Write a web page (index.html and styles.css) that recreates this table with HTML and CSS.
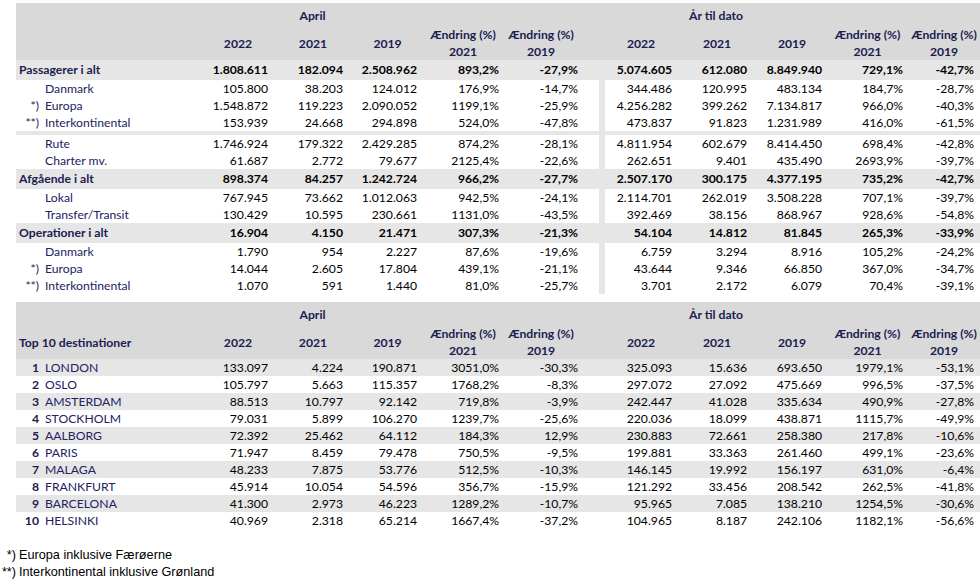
FILE: index.html
```html
<!DOCTYPE html>
<html lang="da">
<head>
<meta charset="utf-8">
<title>Trafiktal April</title>
<link rel="stylesheet" href="styles.css">
</head>
<body>
<div class="page">
<table class="tbl">
<colgroup>
<col class="ca"><col class="cb"><col class="c1"><col class="c2"><col class="c3"><col class="c4"><col class="c5"><col class="cg"><col class="c6"><col class="c7"><col class="c8"><col class="c9"><col class="c10">
</colgroup>
<thead>
<tr class="h1">
<th colspan="2"></th><th colspan="3" class="hc">April</th><th></th><th></th><th></th><th colspan="3" class="hc">År til dato</th><th></th><th></th>
</tr>
<tr class="h2">
<th colspan="2"></th><th class="hy">2022</th><th class="hy hs">2021</th><th class="hy hs">2019</th><th class="hy">Ændring (%)<br>2021</th><th class="hy h5">Ændring (%)<br>2019</th><th></th><th class="hy">2022</th><th class="hy hs">2021</th><th class="hy hs">2019</th><th class="hy">Ændring (%)<br>2021</th><th class="hy">Ændring (%)<br>2019</th>
</tr>
</thead>
<tbody>
<tr class="band"><td colspan="2" class="tl">Passagerer i alt</td><td class="n">1.808.611</td><td class="n">182.094</td><td class="n">2.508.962</td><td class="n">893,2%</td><td class="n n5">-27,9%</td><td></td><td class="n">5.074.605</td><td class="n">612.080</td><td class="n">8.849.940</td><td class="n">729,1%</td><td class="n n10">-42,7%</td></tr>
<tr class="r"><td class="pf"></td><td class="lb">Danmark</td><td class="n">105.800</td><td class="n">38.203</td><td class="n">124.012</td><td class="n">176,9%</td><td class="n n5">-14,7%</td><td class="g"></td><td class="n">344.486</td><td class="n">120.995</td><td class="n">483.134</td><td class="n">184,7%</td><td class="n n10">-28,7%</td></tr>
<tr class="r"><td class="pf">*)</td><td class="lb">Europa</td><td class="n">1.548.872</td><td class="n">119.223</td><td class="n">2.090.052</td><td class="n">1199,1%</td><td class="n n5">-25,9%</td><td class="g"></td><td class="n">4.256.282</td><td class="n">399.262</td><td class="n">7.134.817</td><td class="n">966,0%</td><td class="n n10">-40,3%</td></tr>
<tr class="r"><td class="pf">**)</td><td class="lb">Interkontinental</td><td class="n">153.939</td><td class="n">24.668</td><td class="n">294.898</td><td class="n">524,0%</td><td class="n n5">-47,8%</td><td class="g"></td><td class="n">473.837</td><td class="n">91.823</td><td class="n">1.231.989</td><td class="n">416,0%</td><td class="n n10">-61,5%</td></tr>
<tr class="sep"><td colspan="13"></td></tr>
<tr class="r"><td class="pf"></td><td class="lb">Rute</td><td class="n">1.746.924</td><td class="n">179.322</td><td class="n">2.429.285</td><td class="n">874,2%</td><td class="n n5">-28,1%</td><td class="g"></td><td class="n">4.811.954</td><td class="n">602.679</td><td class="n">8.414.450</td><td class="n">698,4%</td><td class="n n10">-42,8%</td></tr>
<tr class="r"><td class="pf"></td><td class="lb">Charter mv.</td><td class="n">61.687</td><td class="n">2.772</td><td class="n">79.677</td><td class="n">2125,4%</td><td class="n n5">-22,6%</td><td class="g"></td><td class="n">262.651</td><td class="n">9.401</td><td class="n">435.490</td><td class="n">2693,9%</td><td class="n n10">-39,7%</td></tr>
<tr class="band"><td colspan="2" class="tl">Afgående i alt</td><td class="n">898.374</td><td class="n">84.257</td><td class="n">1.242.724</td><td class="n">966,2%</td><td class="n n5">-27,7%</td><td></td><td class="n">2.507.170</td><td class="n">300.175</td><td class="n">4.377.195</td><td class="n">735,2%</td><td class="n n10">-42,7%</td></tr>
<tr class="r"><td class="pf"></td><td class="lb">Lokal</td><td class="n">767.945</td><td class="n">73.662</td><td class="n">1.012.063</td><td class="n">942,5%</td><td class="n n5">-24,1%</td><td class="g"></td><td class="n">2.114.701</td><td class="n">262.019</td><td class="n">3.508.228</td><td class="n">707,1%</td><td class="n n10">-39,7%</td></tr>
<tr class="r"><td class="pf"></td><td class="lb">Transfer/Transit</td><td class="n">130.429</td><td class="n">10.595</td><td class="n">230.661</td><td class="n">1131,0%</td><td class="n n5">-43,5%</td><td class="g"></td><td class="n">392.469</td><td class="n">38.156</td><td class="n">868.967</td><td class="n">928,6%</td><td class="n n10">-54,8%</td></tr>
<tr class="band"><td colspan="2" class="tl">Operationer i alt</td><td class="n">16.904</td><td class="n">4.150</td><td class="n">21.471</td><td class="n">307,3%</td><td class="n n5">-21,3%</td><td></td><td class="n">54.104</td><td class="n">14.812</td><td class="n">81.845</td><td class="n">265,3%</td><td class="n n10">-33,9%</td></tr>
<tr class="r"><td class="pf"></td><td class="lb">Danmark</td><td class="n">1.790</td><td class="n">954</td><td class="n">2.227</td><td class="n">87,6%</td><td class="n n5">-19,6%</td><td class="g"></td><td class="n">6.759</td><td class="n">3.294</td><td class="n">8.916</td><td class="n">105,2%</td><td class="n n10">-24,2%</td></tr>
<tr class="r"><td class="pf">*)</td><td class="lb">Europa</td><td class="n">14.044</td><td class="n">2.605</td><td class="n">17.804</td><td class="n">439,1%</td><td class="n n5">-21,1%</td><td class="g"></td><td class="n">43.644</td><td class="n">9.346</td><td class="n">66.850</td><td class="n">367,0%</td><td class="n n10">-34,7%</td></tr>
<tr class="r"><td class="pf">**)</td><td class="lb">Interkontinental</td><td class="n">1.070</td><td class="n">591</td><td class="n">1.440</td><td class="n">81,0%</td><td class="n n5">-25,7%</td><td class="g"></td><td class="n">3.701</td><td class="n">2.172</td><td class="n">6.079</td><td class="n">70,4%</td><td class="n n10">-39,1%</td></tr>
</tbody>
</table>

<table class="tbl top10">
<colgroup>
<col class="ca"><col class="cb"><col class="c1"><col class="c2"><col class="c3"><col class="c4"><col class="c5"><col class="cg"><col class="c6"><col class="c7"><col class="c8"><col class="c9"><col class="c10">
</colgroup>
<thead>
<tr class="h1">
<th colspan="2"></th><th colspan="3" class="hc">April</th><th></th><th></th><th></th><th colspan="3" class="hc">År til dato</th><th></th><th></th>
</tr>
<tr class="h2">
<th colspan="2" class="tl">Top 10 destinationer</th><th class="hy">2022</th><th class="hy hs">2021</th><th class="hy hs">2019</th><th class="hy">Ændring (%)<br>2021</th><th class="hy h5">Ændring (%)<br>2019</th><th></th><th class="hy">2022</th><th class="hy hs">2021</th><th class="hy hs">2019</th><th class="hy">Ændring (%)<br>2021</th><th class="hy">Ændring (%)<br>2019</th>
</tr>
</thead>
<tbody>
<tr class="r alt"><td class="pf rk">1</td><td class="lb">LONDON</td><td class="n">133.097</td><td class="n">4.224</td><td class="n">190.871</td><td class="n">3051,0%</td><td class="n n5">-30,3%</td><td></td><td class="n">325.093</td><td class="n">15.636</td><td class="n">693.650</td><td class="n">1979,1%</td><td class="n n10">-53,1%</td></tr>
<tr class="r"><td class="pf rk">2</td><td class="lb">OSLO</td><td class="n">105.797</td><td class="n">5.663</td><td class="n">115.357</td><td class="n">1768,2%</td><td class="n n5">-8,3%</td><td></td><td class="n">297.072</td><td class="n">27.092</td><td class="n">475.669</td><td class="n">996,5%</td><td class="n n10">-37,5%</td></tr>
<tr class="r alt"><td class="pf rk">3</td><td class="lb">AMSTERDAM</td><td class="n">88.513</td><td class="n">10.797</td><td class="n">92.142</td><td class="n">719,8%</td><td class="n n5">-3,9%</td><td></td><td class="n">242.447</td><td class="n">41.028</td><td class="n">335.634</td><td class="n">490,9%</td><td class="n n10">-27,8%</td></tr>
<tr class="r"><td class="pf rk">4</td><td class="lb">STOCKHOLM</td><td class="n">79.031</td><td class="n">5.899</td><td class="n">106.270</td><td class="n">1239,7%</td><td class="n n5">-25,6%</td><td></td><td class="n">220.036</td><td class="n">18.099</td><td class="n">438.871</td><td class="n">1115,7%</td><td class="n n10">-49,9%</td></tr>
<tr class="r alt"><td class="pf rk">5</td><td class="lb">AALBORG</td><td class="n">72.392</td><td class="n">25.462</td><td class="n">64.112</td><td class="n">184,3%</td><td class="n n5">12,9%</td><td></td><td class="n">230.883</td><td class="n">72.661</td><td class="n">258.380</td><td class="n">217,8%</td><td class="n n10">-10,6%</td></tr>
<tr class="r"><td class="pf rk">6</td><td class="lb">PARIS</td><td class="n">71.947</td><td class="n">8.459</td><td class="n">79.478</td><td class="n">750,5%</td><td class="n n5">-9,5%</td><td></td><td class="n">199.881</td><td class="n">33.363</td><td class="n">261.460</td><td class="n">499,1%</td><td class="n n10">-23,6%</td></tr>
<tr class="r alt"><td class="pf rk">7</td><td class="lb">MALAGA</td><td class="n">48.233</td><td class="n">7.875</td><td class="n">53.776</td><td class="n">512,5%</td><td class="n n5">-10,3%</td><td></td><td class="n">146.145</td><td class="n">19.992</td><td class="n">156.197</td><td class="n">631,0%</td><td class="n n10">-6,4%</td></tr>
<tr class="r"><td class="pf rk">8</td><td class="lb">FRANKFURT</td><td class="n">45.914</td><td class="n">10.054</td><td class="n">54.596</td><td class="n">356,7%</td><td class="n n5">-15,9%</td><td></td><td class="n">121.292</td><td class="n">33.456</td><td class="n">208.542</td><td class="n">262,5%</td><td class="n n10">-41,8%</td></tr>
<tr class="r alt"><td class="pf rk">9</td><td class="lb">BARCELONA</td><td class="n">41.300</td><td class="n">2.973</td><td class="n">46.223</td><td class="n">1289,2%</td><td class="n n5">-10,7%</td><td></td><td class="n">95.965</td><td class="n">7.085</td><td class="n">138.210</td><td class="n">1254,5%</td><td class="n n10">-30,6%</td></tr>
<tr class="r"><td class="pf rk">10</td><td class="lb">HELSINKI</td><td class="n">40.969</td><td class="n">2.318</td><td class="n">65.214</td><td class="n">1667,4%</td><td class="n n5">-37,2%</td><td></td><td class="n">104.965</td><td class="n">8.187</td><td class="n">242.106</td><td class="n">1182,1%</td><td class="n n10">-56,6%</td></tr>
</tbody>
</table>
</div>

<div class="notes">
<div class="note"><span class="np">*)</span><span>Europa inklusive Færøerne</span></div>
<div class="note"><span class="np">**)</span><span>Interkontinental inklusive Grønland</span></div>
</div>
</body>
</html>
```
FILE: styles.css
```css
html, body {
  margin: 0;
  padding: 0;
  background: #ffffff;
}

.page {
  padding: 3px 0 0 16px;
  font-family: Lato, "Open Sans", sans-serif;
  font-size: 12.2px;
  color: #000000;
}

.tbl {
  width: 964px;
  table-layout: fixed;
  border-collapse: collapse;
  border-spacing: 0;
}

.top10 {
  margin-top: 8px;
}

.ca { width: 26px; }
.cb { width: 161px; }
.c1 { width: 70px; }
.c2 { width: 75px; }
.c3 { width: 74px; }
.c4 { width: 82px; }
.c5 { width: 95px; }
.cg { width: 6px; }
.c6 { width: 72px; }
.c7 { width: 75px; }
.c8 { width: 75px; }
.c9 { width: 81px; }
.c10 { width: 72px; }

.tbl th,
.tbl td {
  padding: 0;
  white-space: nowrap;
  overflow: visible;
}

.h1 th,
.h2 th {
  background: #d9d9d9;
  color: #1a2050;
  font-weight: 700;
  line-height: 17px;
}

.h1 th {
  height: 22px;
  vertical-align: middle;
  padding-top: 1px;
}

.h2 th {
  height: 34px;
  vertical-align: middle;
}

.hc {
  text-align: center;
}

.hy {
  text-align: center;
}

.hs {
  padding-left: 5px !important;
}

.h5 {
  padding-right: 21px !important;
}

.h2 th.tl {
  text-align: left;
  padding-left: 3px;
}

.band td {
  background: #e6e6e6;
  height: 20px;
  line-height: 20px;
  font-weight: 700;
}

.band td.tl {
  color: #1a2050;
  padding-left: 3px;
}

.r td {
  height: 17px;
  line-height: 17px;
}

.alt td {
  background: #e6e6e6;
}

.sep td {
  height: 4px;
  line-height: 0;
  font-size: 0;
  background: #e6e6e6;
}

td.g {
  background: #e6e6e6;
}

td.n {
  text-align: right;
  padding-right: 5px;
}

td.n5 {
  padding-right: 21px;
}

td.n10 {
  padding-right: 6px;
}

td.pf {
  text-align: right;
  padding-right: 3px;
  color: #1e1e58;
}

td.rk {
  font-weight: 700;
  color: #1a2050;
}

td.lb {
  text-align: left;
  padding-left: 3px;
  color: #222262;
}

.notes {
  margin-top: 18px;
  font-family: "Liberation Sans", Arial, sans-serif;
  font-size: 12.7px;
  color: #000000;
}

.note {
  display: flex;
  gap: 3px;
  line-height: 17px;
}

.np {
  width: 16px;
  text-align: right;
}
```
